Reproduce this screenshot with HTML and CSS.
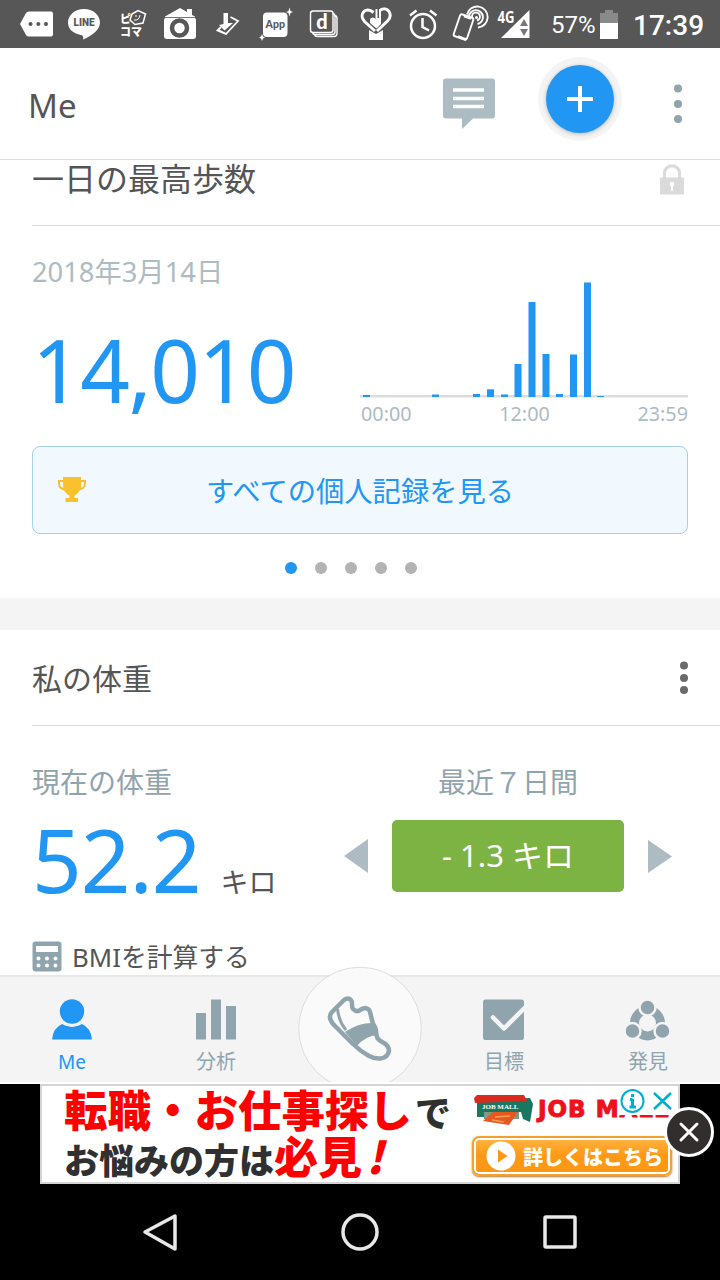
FILE: index.html
```html
<!DOCTYPE html>
<html lang="ja">
<head>
    <meta charset="UTF-8">
    <title>Me</title>
    <link rel="stylesheet" href="styles.css">
</head>
<body>
    <div class="status-bar">
        <svg class="status-icon" viewBox="0 0 48 48"><path fill="#fff" d="M8 24 14 13Q15 11.500 17 11.500H39Q41 11.500 41 13.500V34.500Q41 36.500 39 36.500H17Q15 36.500 14 35Z"/><g fill="#575757"><circle cx="18.500" cy="24" r="2"/><circle cx="26.300" cy="24" r="2"/><circle cx="34" cy="24" r="2"/></g></svg>
        <svg class="status-icon" viewBox="0 0 48 48"><path fill="#fff" d="M24 9C15 9 8 15 8 22.500 8 29 13 33.500 21 35Q24 35.500 23 39.500C29 37 40 31 40 22.500 40 15 33 9 24 9Z"/><text class="line-text" x="24" y="26">LINE</text></svg>
        <svg class="status-icon" viewBox="0 0 48 48"><text class="koma-text" x="12" y="23">ピ</text><text class="koma-text" x="12" y="35.500" textLength="22">コマ</text><path fill="#575757" stroke="#fff" stroke-width="1.500" d="M24 14 30 10.500 37.500 14 35 23 27 24.500 22 20Z"/><path fill="none" stroke="#fff" d="M26 20Q31 21 32 15M28 15V17"/></svg>
        <svg class="status-icon" viewBox="0 0 48 48"><path fill="#fff" d="M9 16.500 24 8 31 12V9H36V15L39 16.500V18H9Z"/><rect x="8" y="17.500" width="32" height="21.500" rx="3" fill="#fff"/><path stroke="#777" d="M9 17.500H39"/><circle cx="23.500" cy="28" r="7.500" fill="#fff" stroke="#575757" stroke-width="4.500"/></svg>
        <svg class="status-icon" viewBox="0 0 48 48"><path fill="none" stroke="#fff" stroke-width="1.800" d="M26.500 17 34 21 22 34 13.500 30.500 17 27"/><path fill="#fff" d="M19.500 13H24V23H29L20.500 30.500 15 25 19.500 24ZM14 29 22 33 23 35 13 31Z"/></svg>
        <svg class="status-icon" viewBox="0 0 48 48"><rect x="11" y="12.500" width="24.500" height="24.500" rx="4" fill="#fff"/><path fill="#fff" d="M37.500 7.500 38.500 11 41 12 38.500 13 37.500 16.500 36.500 13 34 12 36.500 11ZM10 34 11 36.500 13 37.500 11 38.500 10 41 9 38.500 7 37.500 9 36.500Z"/><text class="app-text" x="23.300" y="28">App</text></svg>
        <svg class="status-icon" viewBox="0 0 48 48"><g fill="none" stroke="#fff" stroke-width="1.400"><rect x="10.500" y="11" width="22.500" height="21.500" rx="2.500"/><path d="M33 13.500Q35 14 35 16V32Q35 34.500 32 34.500H15Q13 34.500 12.500 32.500M35 15.500Q37 16 37 18V33Q37 36.500 34 36.500H17Q15 36.500 14.500 34.500"/></g><text class="d-text" x="22" y="29">d</text></svg>
        <svg class="status-icon" viewBox="0 0 48 48"><path fill="none" stroke="#fff" stroke-width="3" d="M27 31 16.500 21.500C10 14 18 6 25.500 12.500M32.500 10C39 6 46 14 39.500 21L29 31"/><path fill="#fff" d="M22 19Q25 16 27.500 19V9H29.500V18L31 18V9H33V24L28.500 28.500 22 23ZM21 30 28 34 35 30V40H21Z"/></svg>
        <svg class="status-icon" viewBox="0 0 48 48"><g fill="none" stroke="#fff" stroke-width="2.500"><circle cx="27" cy="26" r="12"/><path d="M26.500 18V27L33 30.500M14 15.500 20.500 10.500M34 10.500 40.500 15.500"/></g></svg>
        <svg class="status-icon" viewBox="0 0 48 48"><g fill="none" stroke="#fff" stroke-width="1.900"><rect x="12.500" y="15.500" width="14" height="23" rx="2" transform="rotate(19 19.500 27)"/><path d="M23 14.500A10.500 10.500 0 1 1 34 27.500M25 16.500A7 7 0 1 1 33.500 24M28 17A4 4 0 1 1 33 20.500"/></g><circle cx="32.500" cy="17.500" r="1.500" fill="#fff"/><path stroke="#fff" stroke-width="2.500" d="M14 36.500 22 39.500M20 16 27 18.500"/></svg>
        <svg class="status-icon" viewBox="0 0 48 48"><path fill="#fff" d="M9 38H37.500V10Z"/><path fill="#777" d="M28 26 32 19 36 26ZM28 29H36L32 36Z"/><text class="network-text" x="5.500" y="22.500" textLength="17" lengthAdjust="spacingAndGlyphs">4G</text></svg>
        <span class="battery-text">57%</span>
        <svg class="battery-icon" viewBox="0 0 18 30"><path fill="#8a8a8a" d="M5 0H13V3H18V14H0V3H5Z"/><path fill="#fff" d="M0 13H18V29H0Z"/></svg>
        <span class="clock">17:39</span>
    </div>

    <header class="toolbar">
        <h1>Me</h1>
        <svg class="chat-icon" viewBox="0 0 52 51"><path fill="#adbbc2" d="M3 0.500H49Q52 0.500 52 3.500V37.500Q52 40.500 49 40.500H30L19 51V40.500H3Q0 40.500 0 37.500V3.500Q0 .5 3 .5Z"/><path stroke="#fff" stroke-width="3.500" d="M10 12H41M10 20.500H41M10 28.500H41"/></svg>
        <button class="add-button"><span><svg viewBox="0 0 26 26"><path stroke="#fff" stroke-width="4" d="M13 0V26M0 13H26"/></svg></span></button>
        <svg class="menu-icon" viewBox="0 0 8 40"><g fill="#90a4ae"><circle cx="4" cy="4.500" r="4"/><circle cx="4" cy="20" r="4"/><circle cx="4" cy="35" r="4"/></g></svg>
    </header>

    <main>
        <section class="card record-card">
            <div class="card-title steps-title">
                <h2>一日の最高歩数</h2>
                <svg class="lock-icon" viewBox="0 0 24 31"><path fill="none" stroke="#dadada" stroke-width="3" d="M4.500 15V9.500C4.500-1 19.500-1 19.500 9.500V15"/><rect y="13.500" width="24" height="17" rx="1" fill="#dadada"/><circle cx="12" cy="20" r="2.300" fill="#fff"/><path stroke="#fff" stroke-width="2" d="M12 20V27"/></svg>
            </div>
            <div class="record-body">
                <div class="record-info">
                    <div class="record-date">2018年3月14日</div>
                    <div class="big-number steps">14,010</div>
                </div>
                <div class="chart">
                    <svg viewBox="0 0 328 118">
                        <rect y="115" width="328" height="2.500" fill="#ddd"/>
                        <g fill="#2196f3">
                            <rect x="3" y="115" width="7" height="2"/>
                            <rect x="72" y="114.500" width="7" height="2.500"/>
                            <rect x="113" y="114" width="7" height="3"/>
                            <rect x="127" y="109.300" width="7" height="7.700"/>
                            <rect x="141" y="114.500" width="7" height="2.500"/>
                            <rect x="154.500" y="84" width="7" height="33"/>
                            <rect x="168.500" y="22" width="7" height="95"/>
                            <rect x="182.500" y="74" width="7" height="43"/>
                            <rect x="196" y="114" width="7" height="3"/>
                            <rect x="210" y="74.500" width="7" height="42.500"/>
                            <rect x="224" y="2.500" width="7" height="114.500"/>
                            <rect x="237" y="116" width="7" height="1"/>
                        </g>
                    </svg>
                    <div class="chart-labels"><span>00:00</span><span>12:00</span><span>23:59</span></div>
                </div>
            </div>
            <button class="records-button">
                <svg class="trophy-icon" viewBox="0 0 28 26"><path fill="#fbc02d" d="M5 0H23V3H28V6Q28 12 21.500 13.500 20 17 16.500 18.500V21H20V25H7.500V21H11.500V18.500Q8 17 6 13.500 0 12 0 6V3H5ZM5 5H2V6Q2 10 5.300 11ZM23 5V11Q26 10 26 6V5Z"/></svg>
                <span>すべての個人記録を見る</span>
            </button>
            <div class="pager"><i class="active"></i><i></i><i></i><i></i><i></i></div>
        </section>

        <section class="card weight-card">
            <div class="card-title">
                <h2>私の体重</h2>
                <svg class="weight-menu" viewBox="0 0 8 34"><g fill="#6b6b6b"><circle cx="4" cy="4.500" r="4"/><circle cx="4" cy="17" r="4"/><circle cx="4" cy="29" r="4"/></g></svg>
            </div>
            <div class="weight-body">
                <div class="current-weight">
                    <div class="weight-label">現在の体重</div>
                    <div class="weight-value"><span class="big-number">52.2</span><span class="unit">キロ</span></div>
                </div>
                <div class="weekly">
                    <div class="weight-label">最近７日間</div>
                    <div class="weekly-row">
                        <svg viewBox="0 0 24 34"><path fill="#adbbc2" d="M0 17 24 0V34Z"/></svg>
                        <div class="weight-change">- 1.3 キロ</div>
                        <svg viewBox="0 0 24 34"><path fill="#adbbc2" d="M24 17.500 0 1V34Z"/></svg>
                    </div>
                </div>
            </div>
            <div class="bmi">
                <svg viewBox="0 0 30 31"><rect x=".5" y=".5" width="29" height="30" rx="3" fill="#90a4ae"/><path fill="#fff" d="M4 5H26V11H4Z"/><g fill="#fff"><circle cx="6.500" cy="17.500" r="2"/><circle cx="15" cy="17.500" r="2"/><circle cx="23.500" cy="17.500" r="2"/><circle cx="6.500" cy="24.500" r="2"/><circle cx="15" cy="24.500" r="2"/><circle cx="23.500" cy="24.500" r="2"/></g></svg>
                <span>BMIを計算する</span>
            </div>
        </section>
    </main>

    <nav class="bottom-nav">
        <a class="nav-item active">
            <svg viewBox="0 0 44 42"><g fill="#2196f3"><circle cx="22" cy="12.500" r="12.200"/><path d="M2 40.500Q3 29 12 25Q22 31 32 25Q41 29 42 40.500Z"/></g></svg>
            <span>Me</span>
        </a>
        <a class="nav-item">
            <svg viewBox="0 0 44 42"><path fill="#90a4ae" d="M2 14H12V40.500H2ZM17 .5H27V40.500H17ZM32 7H42V40.500H32Z"/></svg>
            <span>分析</span>
        </a>
        <a class="nav-item">
            <svg class="track-button" viewBox="0 0 124 116"><circle cx="62" cy="62.500" r="61.300" fill="#fafafa" stroke="#ddd"/><path fill="none" stroke="#90a4ae" stroke-width="4.500" stroke-linejoin="round" d="M46 34Q50 31 53 34C55 36 53 40 55 43Q59 47 63 43.500C67 41 71 42 72 46L75 58C80 64 77 66 79 71Q80 74 86 77 91 80 91 85C89 94 79 94 71 90Q62 85 54 77L36 59Q29 51 34 46Z"/><path fill="#90a4ae" d="M47 66Q61 56 77 57L80 69Q67 70 59 80Z"/><path fill="none" stroke="#90a4ae" stroke-width="3" d="M39.500 43Q41 56 48 64"/></svg>
        </a>
        <a class="nav-item">
            <svg viewBox="2.500 0 44 42"><rect x="3.500" y=".5" width="41" height="40.500" rx="2.500" fill="#90a4ae"/><path fill="none" stroke="#f4f4f4" stroke-width="4.500" stroke-linecap="round" stroke-linejoin="round" d="M13.500 18.500 24.500 29.500 45 9"/></svg>
            <span>目標</span>
        </a>
        <a class="nav-item">
            <svg viewBox="1 0 44 42"><circle cx="22.500" cy="24" r="13" fill="none" stroke="#90a4ae" stroke-width="9"/><g fill="#90a4ae" stroke="#f4f4f4" stroke-width="2.500"><circle cx="22.500" cy="8.500" r="8"/><circle cx="7.500" cy="32" r="8"/><circle cx="37.500" cy="32" r="8"/></g></svg>
            <span>発見</span>
        </a>
    </nav>

    <div class="ad-area">
        <div class="ad">
            <div class="ad-copy">
                <div class="ad-line ad-red">転職・お仕事探し<span class="ad-de">で</span></div>
                <div class="ad-line ad-dark">お悩みの方は<span class="ad-must">必見<b>!</b></span></div>
            </div>
            <div class="ad-side">
                <div class="ad-brand">
                    <svg viewBox="0 0 60 32"><path fill="#197761" d="M3 5 56 3 59 9 56 27 49 24 47 17H10V22H3Z"/><path fill="#d92a20" d="M0 3 3 0H50L53 6 1 8Z"/><path fill="#7d9a88" d="M10 17H45V24H10Z"/><path fill="#e85720" d="M19 17H44L35 30 9 26Z"/><path stroke="#f0a050" stroke-width="1.500" d="M21 22 36 21M18 25 30 27"/><text class="mall-sign" x="8" y="14">JOB MALL</text></svg>
                    <span>JOB MALL</span>
                </div>
                <div class="ad-button">
                    <svg viewBox="0 0 30 30"><circle cx="15" cy="15" r="14.500" fill="#fff"/><path fill="#ff9814" d="M12 8.500 21.500 15 12 21.500Z"/></svg>
                    <span>詳しくはこちら</span>
                </div>
            </div>
            <svg class="ad-choices" viewBox="0 0 58 28"><path fill="#fff" d="M0 0H58V28H0Z"/><g fill="none" stroke="#00aecd" stroke-width="2"><circle cx="12.500" cy="14" r="11"/><path stroke-width="2.500" d="M34 6 51 22M51 6 34 22"/><path stroke-width="3" d="M12.500 12V20.500M12.500 7V10M10 12.500H12.500M9.500 20H16"/></g></svg>
            <svg class="ad-close" viewBox="0 0 52 52"><circle cx="26" cy="26" r="23.500" fill="#332e2e" stroke="#fff" stroke-width="3"/><path stroke="#fff" stroke-width="3" stroke-linecap="round" d="M18 18 34 34M34 18 18 34"/></svg>
        </div>
    </div>

    <div class="system-nav">
        <svg viewBox="0 0 40 40"><path d="M5 20 35 4V37Z"/></svg>
        <svg viewBox="0 0 40 40"><circle cx="20" cy="20" r="17"/></svg>
        <svg viewBox="0 0 40 40"><rect x="5" y="5" width="30" height="30" rx="1"/></svg>
    </div>
</body>
</html>
```

FILE: styles.css
```css
* {
    box-sizing: border-box;
}
body {
    margin: 0;
    width: 720px;
    height: 1280px;
    overflow: hidden;
    display: flex;
    flex-direction: column;
    background-color: #000;
    color: #555;
    font-family: "Noto Sans", "Noto Sans CJK JP", sans-serif;
}
svg {
    display: block;
    flex-shrink: 0;
}
h1, h2 {
    margin: 0;
    font-weight: 400;
}
button {
    border: 0;
    padding: 0;
    font: inherit;
}

/* Status bar */
.status-bar {
    height: 48px;
    flex-shrink: 0;
    display: flex;
    align-items: center;
    padding-left: 12px;
    background-color: #575757;
    color: #fff;
    font-family: Roboto, sans-serif;
}
.status-icon {
    width: 48px;
    height: 48px;
}
.line-text {
    font: 900 10px Roboto, sans-serif;
    text-anchor: middle;
    fill: #575757;
}
.koma-text {
    font: 900 11px "Noto Sans CJK JP", sans-serif;
    fill: #fff;
}
.app-text {
    font: 900 10.500px Lato, sans-serif;
    text-anchor: middle;
    fill: #575757;
}
.d-text {
    font: 900 20px Lato, sans-serif;
    text-anchor: middle;
    fill: #fff;
}
.network-text {
    font: bold 16px "Open Sans", sans-serif;
    fill: #fff;
}
.battery-text {
    width: 48px;
    padding: 2px 0 0 11px;
    font-size: 24px;
    white-space: nowrap;
}
.battery-icon {
    width: 18px;
    height: 30px;
    margin: 1px 15px 0 12px;
}
.clock {
    padding-top: 2px;
    font-size: 28px;
    font-weight: 500;
    white-space: nowrap;
}

/* Toolbar */
.toolbar {
    height: 112px;
    flex-shrink: 0;
    display: flex;
    align-items: flex-start;
    padding: 0 38px 0 28px;
    background-color: #fff;
    border-bottom: 1px solid #ddd;
}
.toolbar h1 {
    flex: 1;
    margin-top: 35px;
    font-size: 33px;
    line-height: 46px;
}
.chat-icon {
    width: 52px;
    height: 51px;
    margin-top: 30px;
}
.add-button {
    width: 84px;
    height: 84px;
    margin: 9px 52px 0 43px;
    display: flex;
    align-items: center;
    justify-content: center;
    border-radius: 50%;
    background-color: #f4f4f4;
}
.add-button span {
    width: 68px;
    height: 68px;
    display: flex;
    align-items: center;
    justify-content: center;
    border-radius: 50%;
    background-color: #2196f3;
    box-shadow: 0 1px 4px rgba(0,0,0,0.25);
}
.add-button svg {
    width: 26px;
    height: 26px;
}
.menu-icon {
    width: 8px;
    height: 40px;
    margin-top: 36px;
}

/* Cards */
main {
    height: 815px;
    flex-shrink: 0;
    overflow: hidden;
    background-color: #f4f4f4;
}
.card {
    background-color: #fff;
    padding-left: 32px;
}
.card-title {
    height: 96px;
    display: flex;
    align-items: center;
    justify-content: space-between;
    padding-right: 32px;
    border-bottom: 1px solid #ddd;
}
.card-title h2 {
    padding-bottom: 2px;
    font-size: 30px;
}
.steps-title {
    height: 66px;
    align-items: flex-start;
    padding-right: 36px;
}
.steps-title h2 {
    font-size: 32px;
    line-height: 38px;
}
.lock-icon {
    width: 24px;
    height: 31px;
    margin-top: 4px;
}
.record-card {
    height: 438px;
}
.record-body {
    height: 220px;
    display: flex;
    justify-content: space-between;
    padding-right: 32px;
}
.record-date {
    margin-top: 26px;
    font-size: 27.300px;
    line-height: 40px;
    color: #adbbc2;
}
.big-number {
    font-size: 87px;
    line-height: 90px;
    color: #2196f3;
    letter-spacing: -1px;
}
.steps {
    margin-top: 32px;
    letter-spacing: -1.500px;
}
.chart {
    width: 328px;
    padding-top: 54px;
}
.chart svg {
    width: 328px;
    height: 118px;
}
.chart-labels {
    display: flex;
    justify-content: space-between;
    padding-left: 1px;
    font-size: 19.800px;
    line-height: 31px;
    color: #adbbc2;
}
.records-button {
    width: 656px;
    height: 88px;
    display: grid;
    grid-template-columns: 28px 1fr 28px;
    align-items: center;
    padding: 0 25px;
    border: 1px solid #a9cfee;
    border-radius: 8px;
    background-color: #f1f8fe;
    font-size: 28.300px;
    color: #2196f3;
}
.records-button span {
    padding-bottom: 2px;
}
.trophy-icon {
    width: 28px;
    height: 26px;
}
.pager {
    width: 132px;
    margin: 28px 0 0 253px;
    display: flex;
    justify-content: space-between;
}
.pager i {
    width: 12px;
    height: 12px;
    border-radius: 50%;
    background-color: #b3b3b3;
}
.pager .active {
    background-color: #2196f3;
}

/* Weight */
.weight-card {
    height: 346px;
    margin-top: 32px;
}
.weight-menu {
    width: 8px;
    height: 34px;
}
.weight-body {
    height: 212px;
    display: flex;
    justify-content: space-between;
    padding: 36px 48px 0 0;
}
.weight-label {
    font-size: 28px;
    line-height: 40px;
    color: #90a4ae;
}
.weight-value {
    display: flex;
    align-items: baseline;
    margin-top: 12px;
}
.unit {
    margin-left: 20px;
    font-size: 28px;
    line-height: 40px;
}
.weekly .weight-label {
    text-align: center;
}
.weekly-row {
    display: flex;
    align-items: center;
    gap: 24px;
    margin-top: 18px;
}
.weekly-row svg {
    width: 24px;
    height: 34px;
}
.weight-change {
    width: 232px;
    height: 72px;
    border-radius: 5px;
    background-color: #7cb342;
    color: #fff;
    font-size: 31px;
    line-height: 71px;
    text-align: center;
}
.bmi {
    display: flex;
    align-items: center;
    gap: 10px;
    font-size: 25.800px;
    line-height: 36px;
}
.bmi svg {
    width: 30px;
    height: 31px;
}
.bmi span {
    padding-top: 1px;
}

/* Bottom navigation */
.bottom-nav {
    height: 109px;
    flex-shrink: 0;
    position: relative;
    display: grid;
    grid-template-columns: repeat(5, 144px);
    border-top: 2px solid #e7e7e7;
    border-bottom: 2px solid #fff;
    background-color: #f4f4f4;
}
.nav-item {
    display: flex;
    flex-direction: column;
    align-items: center;
    padding-top: 22px;
    color: #90a4ae;
    font-size: 20px;
    line-height: 30px;
}
.nav-item svg {
    width: 44px;
    height: 42px;
    margin-bottom: 6px;
}
.nav-item.active {
    color: #2196f3;
    font-size: 19px;
}
.nav-item .track-button {
    position: absolute;
    left: 298px;
    bottom: 0;
    width: 124px;
    height: 116px;
    margin: 0;
}

/* Ad banner */
.ad-area {
    height: 100px;
    flex-shrink: 0;
    padding: 0 40px;
}
.ad {
    position: relative;
    height: 100px;
    display: flex;
    border: 2px solid #d4d4d4;
    background-color: #fff;
}
.ad-copy {
    width: 430px;
    padding-left: 22px;
    font-family: "Noto Sans CJK JP", sans-serif;
    font-weight: 900;
    white-space: nowrap;
}
.ad-line {
    height: 46px;
    line-height: 46px;
}
.ad-red {
    font-size: 43.500px;
    color: #f00;
}
.ad-de {
    margin-left: 3px;
    font-size: 36px;
    color: #303030;
}
.ad-dark {
    font-size: 35px;
    color: #303030;
}
.ad-must {
    font-size: 44px;
    color: #f00;
}
.ad-must b {
    margin-left: 4px;
    font-style: italic;
    font-weight: 900;
}
.ad-side {
    padding-top: 9px;
}
.ad-brand {
    height: 32px;
    display: flex;
    padding-left: 2px;
    gap: 4px;
    color: #f0101c;
    font-family: "DejaVu Sans", sans-serif;
    font-size: 23px;
    font-weight: bold;
    line-height: 28px;
    letter-spacing: 1px;
    -webkit-text-stroke: 1px #f0101c;
    white-space: nowrap;
}
.ad-brand svg {
    width: 60px;
    height: 32px;
}
.mall-sign {
    font: bold 7px "Liberation Serif", serif;
    letter-spacing: 0;
    -webkit-text-stroke: 0;
    fill: #fff;
}
.ad-button {
    width: 200px;
    height: 40px;
    margin-top: 9px;
    padding-left: 12px;
    display: flex;
    align-items: center;
    gap: 7px;
    border: 2px solid #f5a02c;
    border-radius: 7px;
    background: linear-gradient(#ffb444, #ff9814 50%, #ff9814);
    box-shadow: inset 0 0 0 2px #fff, 0 1px 2px #b97625;
    color: #fff;
    font-family: "Noto Sans CJK JP", sans-serif;
    font-size: 20px;
    font-weight: 900;
    white-space: nowrap;
}
.ad-button svg {
    width: 30px;
    height: 30px;
}
.ad-choices {
    position: absolute;
    top: 1px;
    right: 0;
    width: 58px;
    height: 28px;
}
.ad-close {
    position: absolute;
    top: 20px;
    right: -37px;
    width: 52px;
    height: 52px;
}

/* Android navigation keys */
.system-nav {
    height: 96px;
    flex-shrink: 0;
    display: flex;
    align-items: center;
    justify-content: center;
    gap: 160px;
}
.system-nav svg {
    width: 40px;
    height: 40px;
    fill: none;
    stroke: #e8e8e8;
    stroke-width: 3.500;
    stroke-linejoin: round;
}
```
